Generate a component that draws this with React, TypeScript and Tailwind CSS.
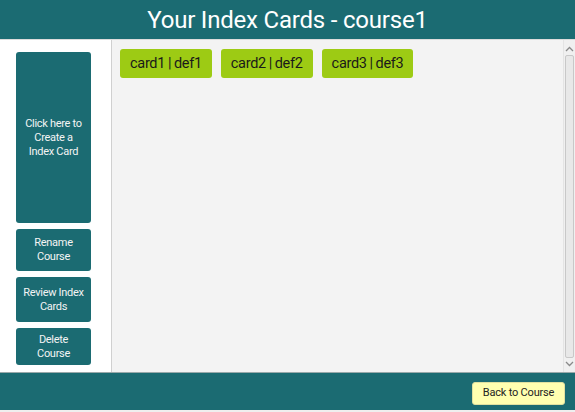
import React from 'react';

const cards = [
  { term: 'card1', def: 'def1' },
  { term: 'card2', def: 'def2' },
  { term: 'card3', def: 'def3' },
];

const SideButton = ({ lines, className = '' }: { lines: string[]; className?: string }) => (
  <button className={`w-[75px] bg-[#1b6b72] text-[#f4f4f4] text-[11px] leading-[14px] tracking-[-0.3px] rounded-[3px] flex flex-col items-center justify-center text-center whitespace-nowrap ${className}`}>
    {lines.map(l => <span key={l}>{l}</span>)}
  </button>
);

export default function App() {
  return (
    <div className="w-[575px] h-[412px] bg-[#efefef] flex flex-col font-['Roboto','Liberation_Sans',sans-serif]">
      <div className="h-[40px] bg-[#1b6b72] text-white text-[24px] tracking-[-0.2px] flex items-center justify-center border-b border-[#dcdcdc]">
        Your Index Cards - course1
      </div>

      <div className="flex h-[332px]">
        <div className="w-[112px] bg-white border-r border-[#d0d0d0] flex flex-col items-start pl-[16px] pt-[12px] gap-[6px]">
          <SideButton className="h-[171px]" lines={['Click here to', 'Create a', 'Index Card']} />
          <SideButton className="h-[42px]" lines={['Rename', 'Course']} />
          <SideButton className="h-[45px]" lines={['Review Index', 'Cards']} />
          <SideButton className="h-[37px]" lines={['Delete', 'Course']} />
        </div>

        <div className="flex-1 bg-[#f3f3f3] flex">
          <div className="flex-1 flex items-start gap-[9px] pl-[8px] pt-[9px]">
            {cards.map(c => (
              <div key={c.term} className="h-[29px] bg-[#9dcb14] rounded-[3px] px-[10px] flex items-center text-[14.5px] tracking-[-0.3px] [word-spacing:-0.5px] text-[#1a1a1a]">
                {c.term} | {c.def}
              </div>
            ))}
          </div>

          <div className="w-[12px] bg-[#f0f0f0] border-l border-[#e4e4e4] flex flex-col items-center">
            <svg width="9" height="6" viewBox="0 0 9 6" className="mt-[6px]">
              <path d="M1 5 L4.5 1.5 L8 5" fill="none" stroke="#8a8a8a" strokeWidth="1.3" />
            </svg>
            <div className="flex-1 w-[9px] mt-[3px] mb-[3px] bg-[#e8e8e8] border border-[#c8c8c8] rounded-[2px]" />
            <svg width="9" height="6" viewBox="0 0 9 6" className="mb-[5px]">
              <path d="M1 1 L4.5 4.5 L8 1" fill="none" stroke="#8a8a8a" strokeWidth="1.3" />
            </svg>
          </div>
        </div>
      </div>

      <div className="h-[38px] bg-[#1b6b72] border-t border-[#9aa9aa] flex items-center justify-end pr-[10px] pt-[3px]">
        <button className="h-[23px] w-[93px] bg-[#ffffb0] text-[#222] text-[11px] tracking-[-0.2px] rounded-[3px] border border-[#e0e0a0]">
          Back to Course
        </button>
      </div>
    </div>
  );
}
